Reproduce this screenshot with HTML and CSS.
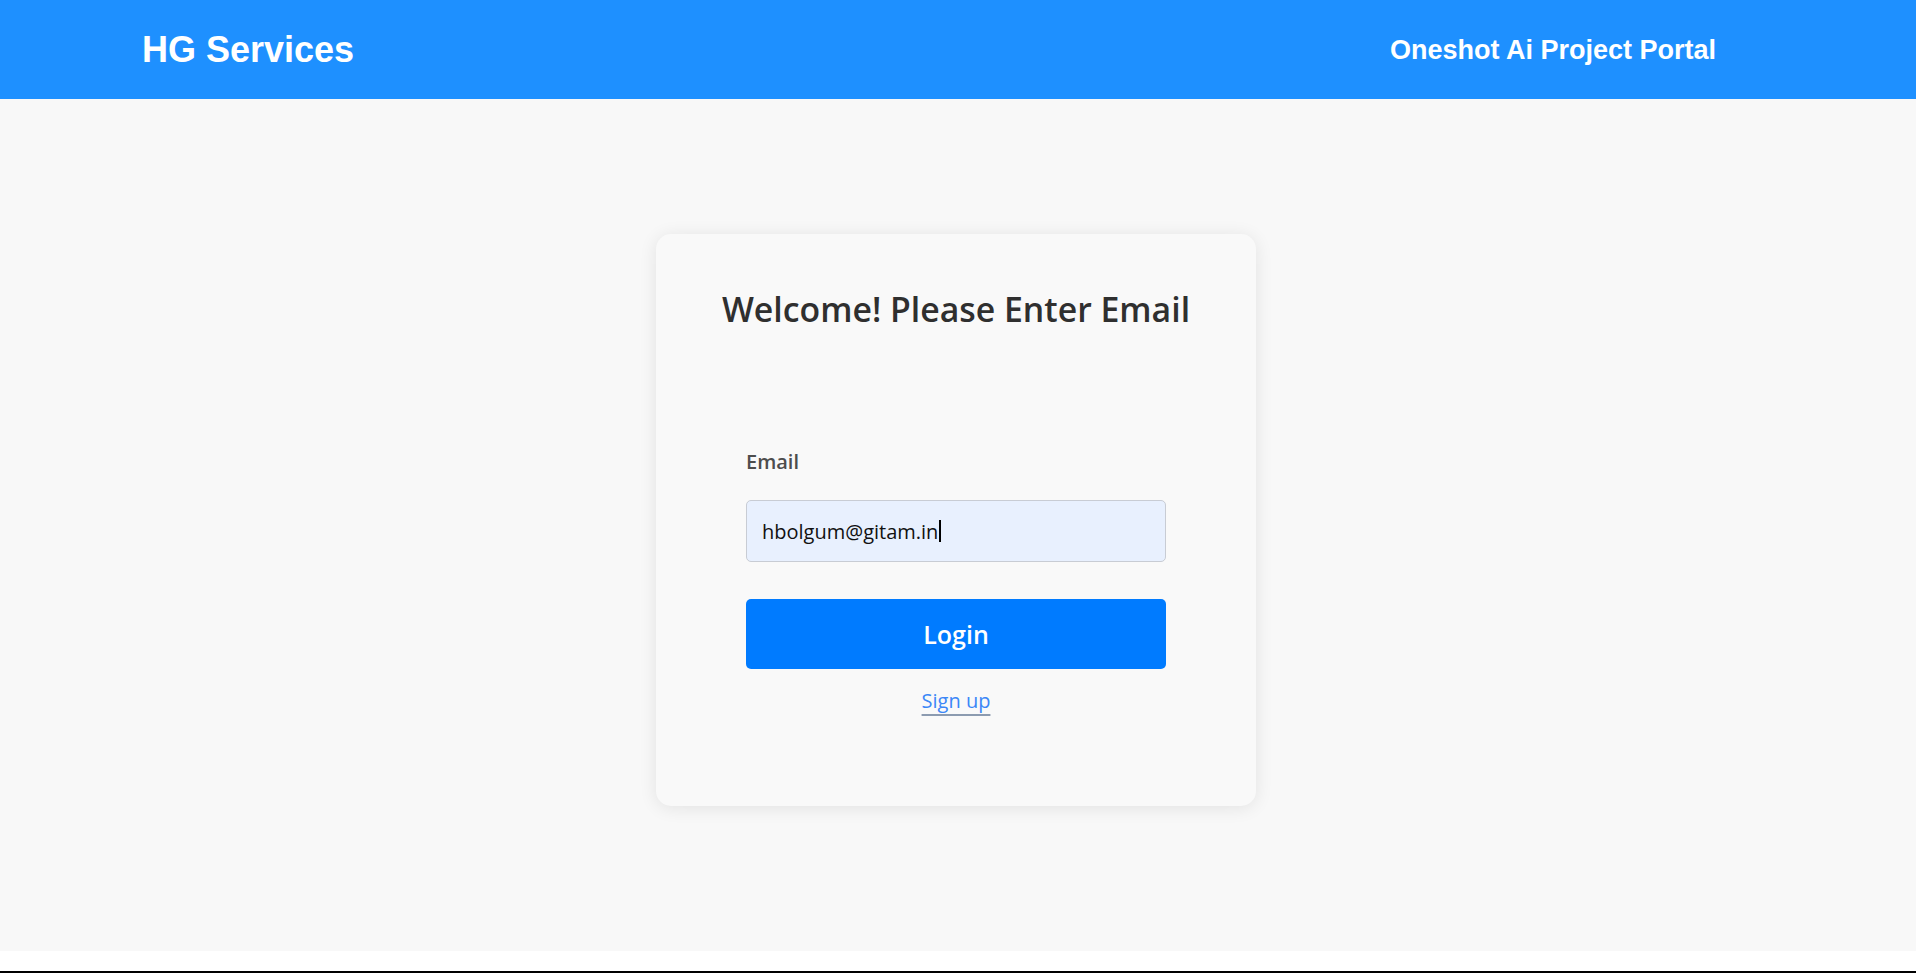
FILE: index.html
```html
<!DOCTYPE html>
<html lang="en">
<head>
<meta charset="utf-8">
<title>HG Services - Login</title>
<link rel="stylesheet" href="styles.css">
</head>
<body>
<div class="page">
  <header class="topbar">
    <div class="brand">HG Services</div>
    <div class="portal">Oneshot Ai Project Portal</div>
  </header>
  <main class="main">
    <section class="card">
      <h2 class="title">Welcome! Please Enter Email</h2>
      <form class="form">
        <label class="label">Email</label>
        <div class="input">hbolgum@gitam.in<span class="caret"></span></div>
        <button class="btn" type="button">Login</button>
        <a class="signup" href="#">Sign up</a>
      </form>
    </section>
  </main>
</div>
<div class="bottom-line"></div>
</body>
</html>
```

FILE: styles.css
```css
html, body {
  margin: 0;
  padding: 0;
}
body {
  background: #ffffff;
  font-family: "Open Sans", "Noto Sans", sans-serif;
}
.page {
  height: 951px;
  background: #f8f8f8;
  display: flex;
  flex-direction: column;
}
.topbar {
  height: 99px;
  flex: none;
  background: #1e90ff;
  color: #ffffff;
  display: flex;
  align-items: center;
  justify-content: space-between;
  padding: 0 200px 0 142px;
  font-family: "Liberation Sans", Arial, sans-serif;
  font-weight: bold;
}
.brand {
  font-size: 36px;
  line-height: 40px;
}
.portal {
  font-size: 27px;
  line-height: 32px;
}
.main {
  flex: 1;
  padding: 135px 4px 0 0;
}
.card {
  width: 600px;
  height: 572px;
  box-sizing: border-box;
  margin: 0 auto;
  background: #f9f9f9;
  border-radius: 15px;
  box-shadow: 0 2px 18px rgba(0, 0, 0, 0.09);
  padding-top: 53px;
}
.title {
  margin: 0;
  text-align: center;
  font-size: 33.8px;
  line-height: 44px;
  font-weight: 600;
  color: #2f2f2f;
}
.form {
  width: 420px;
  margin: 119px auto 0;
  display: flex;
  flex-direction: column;
}
.label {
  font-size: 20px;
  line-height: 24px;
  font-weight: 600;
  color: #4d4d4d;
}
.input {
  margin-top: 26px;
  height: 62px;
  box-sizing: border-box;
  border: 1px solid #c8ccd4;
  border-radius: 5px;
  background: #e8f0fe;
  padding: 0 15px;
  display: flex;
  align-items: center;
  font-size: 20px;
  color: #111111;
}
.caret {
  display: inline-block;
  width: 2px;
  height: 22px;
  background: #000;
  margin-left: 1px;
}
.btn {
  margin-top: 37px;
  height: 70px;
  border: none;
  border-radius: 5px;
  background: #007bff;
  color: #ffffff;
  font-family: "Open Sans", "Noto Sans", sans-serif;
  font-size: 25px;
  font-weight: 600;
  padding: 0;
}
.signup {
  align-self: center;
  margin-top: 20px;
  font-size: 20px;
  line-height: 24px;
  color: #3b87f7;
  text-decoration: underline;
  text-decoration-color: #8c9bb0;
  text-decoration-thickness: 2px;
  text-underline-offset: 6px;
}
.bottom-line {
  margin-top: 20px;
  height: 2px;
  background: #000;
}
```
